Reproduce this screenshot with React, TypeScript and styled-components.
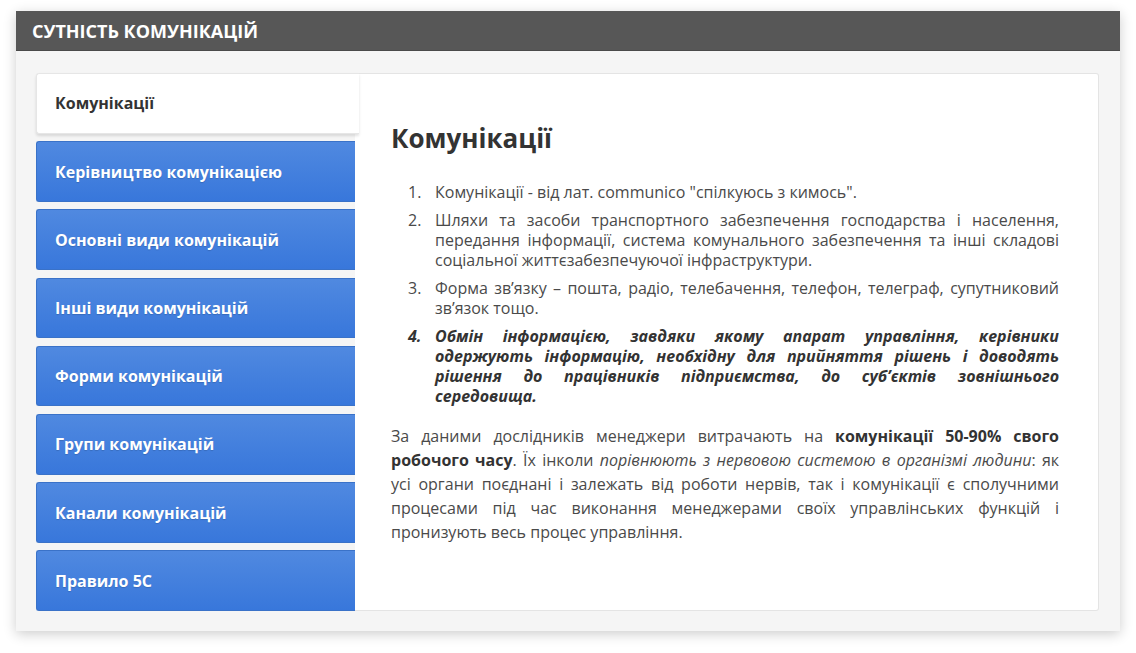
import React from "react";
import styled, { createGlobalStyle } from "styled-components";

const GlobalStyle = createGlobalStyle`
  html, body {
    margin: 0;
    padding: 0;
    background: #ffffff;
    font-family: "Open Sans", "Noto Sans", sans-serif;
  }
`;

const Page = styled.div`
  padding: 11px 16px 22px 16px;
  width: 1104px;
`;

const Card = styled.section`
  background: #f5f5f5;
  box-shadow: 0 3px 12px rgba(0, 0, 0, 0.2);
`;

const CardHeader = styled.header`
  height: 40px;
  background: #575757;
  border-bottom: 1px solid #4a4a4a;
  box-sizing: border-box;
  display: flex;
  align-items: center;
  padding: 0 16px;
  color: #ffffff;
  font-size: 18px;
  font-weight: 700;
`;

const CardBody = styled.div`
  padding: 22px 21px 20px 20px;
`;

const Tabs = styled.div`
  display: grid;
  grid-template-columns: 319px 1fr;
  height: 538px;
`;

const TabList = styled.nav`
  display: flex;
  flex-direction: column;
  gap: 7.6px;
`;

const Tab = styled.div<{ $active?: boolean }>`
  flex: 1;
  display: flex;
  align-items: center;
  padding: 0 18px;
  font-size: 16px;
  font-weight: 700;
  border-radius: 3px 0 0 3px;
  ${(p) =>
    p.$active
      ? `
    background: #ffffff;
    color: #333333;
    border: 1px solid #e6e6e6;
    border-right: none;
    margin-right: -4px;
    position: relative;
    z-index: 1;
    box-shadow: 0 2px 3px rgba(0, 0, 0, 0.12);
  `
      : `
    background: linear-gradient(to bottom, #5089e0, #3877db);
    color: #ffffff;
    border: 1px solid #3a72c8;
    border-right: none;
    text-shadow: 0 1px 1px rgba(0, 0, 0, 0.15);
  `}
`;

const Content = styled.article`
  background: #ffffff;
  border: 1px solid #e4e4e4;
  border-left: none;
  border-radius: 0 3px 3px 0;
  padding: 46px 39px 0 36px;
  color: #4a4a4a;
  font-size: 16px;
`;

const Title = styled.h2`
  margin: 0 0 26px 0;
  font-size: 26px;
  font-weight: 700;
  color: #333333;
  line-height: 36px;
`;

const List = styled.ol`
  margin: 0 0 18px 0;
  padding-left: 17px;
  list-style: none;
  counter-reset: item;
  line-height: 20px;
`;

const Item = styled.li<{ $strong?: boolean }>`
  counter-increment: item;
  display: grid;
  grid-template-columns: 27px 1fr;
  margin-bottom: 8px;
  &::before {
    content: counter(item) ".";
  }
  ${(p) =>
    p.$strong &&
    `
    font-weight: 700;
    font-style: italic;
    color: #333333;
  `}
`;

const ItemText = styled.span`
  text-align: justify;
`;

const Paragraph = styled.p`
  margin: 0;
  line-height: 24px;
  text-align: justify;
`;

const Strong = styled.b`
  color: #333333;
`;

const tabs = [
  "Комунікації",
  "Керівництво комунікацією",
  "Основні види комунікацій",
  "Інші види комунікацій",
  "Форми комунікацій",
  "Групи комунікацій",
  "Канали комунікацій",
  "Правило 5С",
];

export default function App() {
  return (
    <>
      <GlobalStyle />
      <Page>
        <Card>
          <CardHeader>СУТНІСТЬ КОМУНІКАЦІЙ</CardHeader>
          <CardBody>
            <Tabs>
              <TabList>
                {tabs.map((t, i) => (
                  <Tab key={t} $active={i === 0}>
                    {t}
                  </Tab>
                ))}
              </TabList>
              <Content>
                <Title>Комунікації</Title>
                <List>
                  <Item>
                    <ItemText>Комунікації - від лат. communico "спілкуюсь з кимось".</ItemText>
                  </Item>
                  <Item>
                    <ItemText>
                      Шляхи та засоби транспортного забезпечення господарства і населення,
                      передання інформації, система комунального забезпечення та інші складові
                      соціальної життєзабезпечуючої інфраструктури.
                    </ItemText>
                  </Item>
                  <Item>
                    <ItemText>
                      Форма зв’язку – пошта, радіо, телебачення, телефон, телеграф, супутниковий
                      зв’язок тощо.
                    </ItemText>
                  </Item>
                  <Item $strong>
                    <ItemText>
                      Обмін інформацією, завдяки якому апарат управління, керівники одержують
                      інформацію, необхідну для прийняття рішень і доводять рішення до
                      працівників підприємства, до суб’єктів зовнішнього середовища.
                    </ItemText>
                  </Item>
                </List>
                <Paragraph>
                  За даними дослідників менеджери витрачають на{" "}
                  <Strong>комунікації 50-90% свого робочого часу</Strong>. Їх інколи{" "}
                  <i>порівнюють з нервовою системою в організмі людини</i>: як усі органи
                  поєднані і залежать від роботи нервів, так і комунікації є сполучними
                  процесами під час виконання менеджерами своїх управлінських функцій і
                  пронизують весь процес управління.
                </Paragraph>
              </Content>
            </Tabs>
          </CardBody>
        </Card>
      </Page>
    </>
  );
}
